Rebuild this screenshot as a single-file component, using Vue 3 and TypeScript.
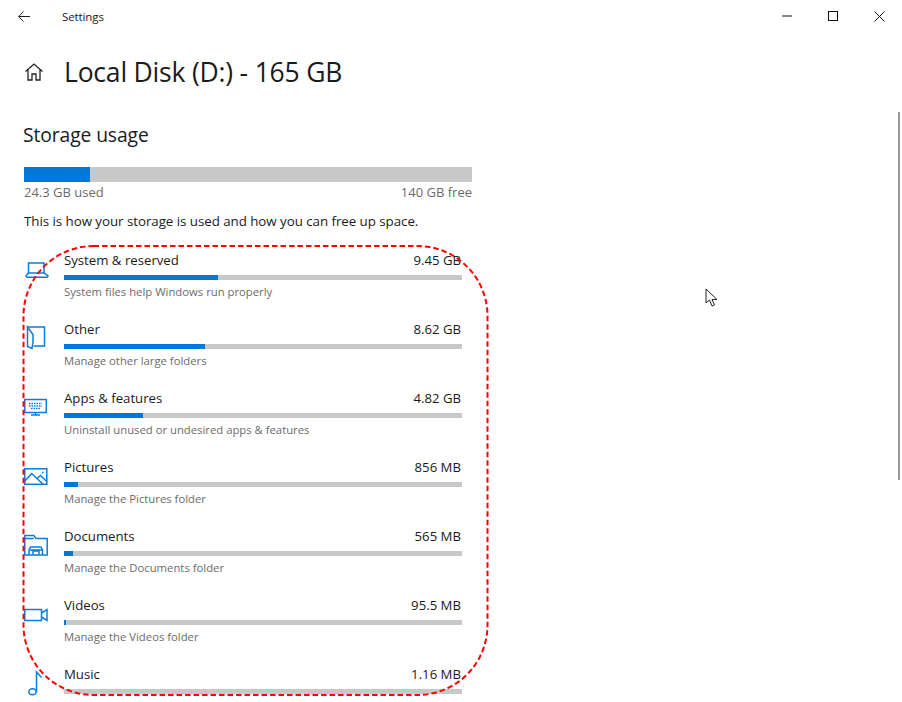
<script setup lang="ts">
interface Row {
  name: string
  size: string
  sub: string
  fill: number
  icon: string
}
const rows: Row[] = [
  { name: 'System & reserved', size: '9.45 GB', sub: 'System files help Windows run properly', fill: 154, icon: 'laptop' },
  { name: 'Other', size: '8.62 GB', sub: 'Manage other large folders', fill: 141, icon: 'other' },
  { name: 'Apps & features', size: '4.82 GB', sub: 'Uninstall unused or undesired apps & features', fill: 79, icon: 'apps' },
  { name: 'Pictures', size: '856 MB', sub: 'Manage the Pictures folder', fill: 14, icon: 'pictures' },
  { name: 'Documents', size: '565 MB', sub: 'Manage the Documents folder', fill: 9, icon: 'documents' },
  { name: 'Videos', size: '95.5 MB', sub: 'Manage the Videos folder', fill: 2, icon: 'videos' },
  { name: 'Music', size: '1.16 MB', sub: 'Manage the Music folder', fill: 0, icon: 'music' },
]
</script>

<template>
  <div class="window">
    <header class="titlebar">
      <svg class="back" width="12" height="11" viewBox="0 0 12 11">
        <path d="M12 5.500H.8M5.500.5L.7 5.500l4.800 5" fill="none" stroke="#222" stroke-width="1" />
      </svg>
      <span class="app-name">Settings</span>
      <div class="controls">
        <svg width="10" height="2" viewBox="0 0 10 2"><path d="M0 1h10" stroke="#111" stroke-width="1" /></svg>
        <svg width="10" height="10" viewBox="0 0 10 10"><rect x=".5" y=".5" width="9" height="9" fill="none" stroke="#111" /></svg>
        <svg width="11" height="11" viewBox="0 0 11 11"><path d="M.5.5l10 10M10.500.5l-10 10" stroke="#111" stroke-width="1" fill="none" /></svg>
      </div>
    </header>

    <main class="content">
      <div class="page-head">
        <svg class="home" width="20" height="20" viewBox="0 0 20 20" fill="none" stroke="#222" stroke-width="1.3">
          <path d="M1.500 9.500L10 2l8.500 7.500M4 7.500V18h4v-6h4v6h4V7.500" />
        </svg>
        <h1>Local Disk (D:) - 165 GB</h1>
      </div>
      <h2>Storage usage</h2>
      <div class="total-bar"><div class="total-fill"></div></div>
      <div class="total-labels"><span>24.3 GB used</span><span>140 GB free</span></div>
      <p class="intro">This is how your storage is used and how you can free up space.</p>

      <ul class="rows">
        <li v-for="r in rows" :key="r.name" class="row">
          <svg class="icon" width="26" height="30" viewBox="0 -4 26 30" fill="none" stroke="#0a7ddb" stroke-width="1.500">
            <g v-if="r.icon === 'laptop'">
              <path d="M4.500 13V3H20v10" /><path d="M4.500 13L2 16l1 1.200h20l1-1.200-4-3z" />
            </g>
            <g v-else-if="r.icon === 'other'">
              <path d="M3.500-2H20.500v19H9.500" /><path d="M3.500-2L9 5.500V13l-1 6.500-4.500-2z" />
            </g>
            <g v-else-if="r.icon === 'apps'">
              <rect x=".8" y="1.500" width="21.500" height="13" /><path d="M11.500 14.500v2.500M7 17h9" />
              <path d="M5 5.500h13M5 8h13M7 10.500h9" stroke-width="1.500" stroke-dasharray="1.500 1" />
            </g>
            <g v-else-if="r.icon === 'pictures'">
              <rect x=".8" y="1.800" width="22" height="15.500" /><path d="M.8 14L7.700 6.500 19 17.300M13 11.500l3.500-3 6.300 6" /><path d="M18 5.500h1.500" />
            </g>
            <g v-else-if="r.icon === 'documents'">
              <path d="M.8 19V-.5h9l2.200 3h11.200V19z" /><path d="M.8 2.500h9" /><path d="M5 19v-5l1.500-3h10.500l1.500 3v5M9 19v-4h6v4M6 14h12" />
            </g>
            <g v-else-if="r.icon === 'videos'">
              <rect x=".8" y="4.500" width="16.700" height="11" /><path d="M17.500 8L23 4.500v11L17.500 12" />
            </g>
            <g v-else>
              <ellipse cx="8.500" cy="17.700" rx="3.700" ry="3" /><path d="M12.500 18V-2l5 5.500" />
            </g>
          </svg>
          <div class="row-body">
            <div class="row-top"><span class="name">{{ r.name }}</span><span class="size">{{ r.size }}</span></div>
            <div class="row-bar"><div class="row-fill" :style="{ width: r.fill + 'px' }"></div></div>
            <div class="sub">{{ r.sub }}</div>
          </div>
        </li>
      </ul>
    </main>

    <div class="scrollbar"></div>

    <svg class="cursor" width="14" height="20" viewBox="0 0 14 20">
      <path d="M1 1v14l3.500-3 2.500 6 2.500-1-2.500-5.500H12z" fill="#fff" stroke="#222" stroke-width="1" />
    </svg>

    <svg class="annotation" width="902" height="702" viewBox="0 0 902 702">
      <rect x="23.500" y="246" width="464" height="449" rx="70" ry="70" fill="none" stroke="#f00" stroke-width="2" stroke-dasharray="5.500 3" />
    </svg>
  </div>
</template>

<style>
html, body { margin: 0; background: #fff; }
</style>

<style scoped>
.window {
  position: relative;
  width: 902px;
  height: 702px;
  overflow: hidden;
  background: #fff;
  color: #1a1a1a;
  font-family: "Open Sans", "Noto Sans", sans-serif;
}
.titlebar {
  display: flex;
  align-items: center;
  height: 32px;
  padding-left: 18px;
  box-sizing: border-box;
}
.back { flex: none; }
.app-name { margin-left: 32px; font-size: 11.500px; letter-spacing: -.1px; }
.controls {
  margin-left: auto;
  width: 120px;
  padding-right: 17px;
  box-sizing: border-box;
  display: flex;
  align-items: center;
  justify-content: space-between;
}
.content {
  padding-left: 24px;
  width: 448px;
}
.page-head {
  display: flex;
  align-items: center;
  margin-top: 18px;
  height: 44px;
}
.home { flex: none; margin-right: 20px; }
h1 {
  margin: 0;
  font-size: 26.500px;
  font-weight: 400;
  letter-spacing: -.2px;
  white-space: nowrap;
}
h2 {
  margin: 27px 0 0 -1px;
  height: 28px;
  line-height: 28px;
  font-size: 19.300px;
  font-weight: 400;
  letter-spacing: -.1px;
}
.total-bar {
  margin-top: 18px;
  height: 15px;
  background: #c8c8c8;
}
.total-fill { width: 66px; height: 100%; background: #0078d7; }
.total-labels {
  display: flex;
  justify-content: space-between;
  height: 21px;
  line-height: 21px;
  font-size: 13px;
  color: #6b6b6b;
}
.intro {
  margin: 8px 0 0;
  height: 20px;
  line-height: 20px;
  font-size: 13.350px;
  letter-spacing: -.05px;
  white-space: nowrap;
}
.rows {
  list-style: none;
  margin: 19px 0 0;
  padding: 0;
}
.row {
  display: flex;
  height: 69px;
}
.icon { flex: none; margin-top: 6px; margin-right: 14px; }
.row-body { width: 398px; }
.row-top {
  display: flex;
  justify-content: space-between;
  height: 20px;
  line-height: 20px;
  font-size: 13.200px;
}
.size { margin-right: 1px; }
.row-bar {
  margin-top: 5px;
  height: 5px;
  background: #c8c8c8;
}
.row-fill { height: 100%; background: #0078d7; }
.sub {
  margin-top: 4px;
  height: 16px;
  line-height: 16px;
  font-size: 11.300px;
  color: #6b6b6b;
  white-space: nowrap;
}
.scrollbar {
  position: absolute;
  left: 898px;
  top: 112px;
  width: 2px;
  height: 368px;
  background: #999;
}
.cursor { position: absolute; left: 705px; top: 288px; }
.annotation { position: absolute; left: 0; top: 0; pointer-events: none; }
</style>
